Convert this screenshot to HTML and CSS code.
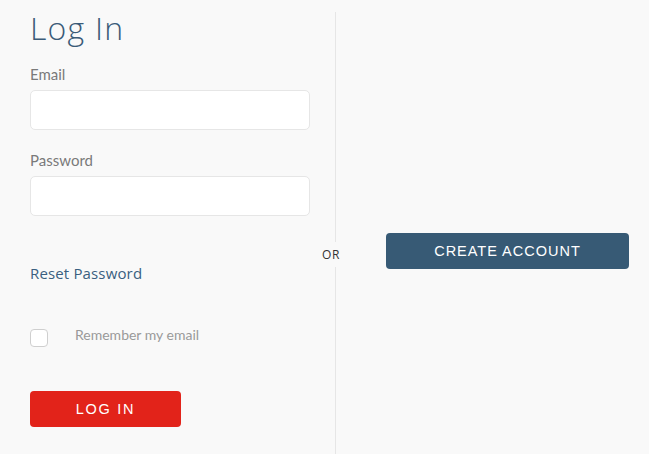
FILE: index.html
```html
<!DOCTYPE html>
<html lang="en">
<head>
<meta charset="utf-8">
<title>Log In</title>
<link rel="stylesheet" href="styles.css">
</head>
<body>
<div class="page">
  <section class="login">
    <h1 class="title">Log In</h1>
    <label class="field-label" for="email">Email</label>
    <input class="field" id="email" type="email">
    <label class="field-label field-label--spaced" for="password">Password</label>
    <input class="field" id="password" type="password">
    <a class="reset" href="#">Reset Password</a>
    <div class="remember">
      <span class="checkbox"></span>
      <span class="remember-text">Remember my email</span>
    </div>
    <button class="btn btn--login" type="button">LOG IN</button>
    <span class="or">OR</span>
  </section>
  <section class="signup">
    <button class="btn btn--create" type="button">CREATE ACCOUNT</button>
  </section>
</div>
</body>
</html>
```
FILE: styles.css
```css
html, body {
  margin: 0;
  padding: 0;
  background: #f9f9f9;
}
body {
  font-family: "Lato", "Open Sans", sans-serif;
}
.page {
  display: flex;
  height: 454px;
  overflow: hidden;
}
.login {
  position: relative;
  width: 305px;
  margin-top: 12px;
  padding-left: 30px;
  border-right: 1px solid #e6e6e6;
  display: flex;
  flex-direction: column;
  align-items: flex-start;
}
.title {
  margin: 0;
  font-family: "Open Sans", sans-serif;
  font-weight: 300;
  font-size: 32px;
  line-height: 32px;
  letter-spacing: 1.2px;
  color: #3b5b78;
}
.field-label {
  margin-top: 21px;
  font-family: "Lato", sans-serif;
  font-size: 15px;
  line-height: 18px;
  color: #7a7a7a;
}
.field-label--spaced {
  margin-top: 21px;
}
.field {
  box-sizing: border-box;
  width: 280px;
  height: 40px;
  margin: 7px 0 0;
  border: 1px solid #e6e6e6;
  border-radius: 5px;
  background: #fff;
  outline: none;
}
.field-label--spaced + .field {
  margin-top: 7px;
}
.reset {
  margin-top: 47px;
  font-family: "Open Sans", sans-serif;
  font-size: 15px;
  line-height: 20px;
  letter-spacing: 0.15px;
  color: #3a5f80;
  text-decoration: none;
}
.remember {
  display: flex;
  align-items: flex-start;
  gap: 27px;
  margin-top: 46px;
}
.checkbox {
  box-sizing: border-box;
  width: 18px;
  height: 18px;
  border: 1px solid #cfcfcf;
  border-radius: 4px;
  background: #fff;
}
.remember-text {
  font-family: "Lato", sans-serif;
  font-size: 14px;
  line-height: 12px;
  color: #999;
}
.btn {
  box-sizing: border-box;
  height: 36px;
  border: 0;
  border-radius: 4px;
  color: #fff;
  font-family: "Liberation Sans", Arial, sans-serif;
  font-size: 14.5px;
  padding: 0;
  cursor: pointer;
}
.btn--login {
  width: 151px;
  margin-top: 44px;
  background: #e2231a;
  letter-spacing: 1.7px;
}
.btn--create {
  width: 243px;
  background: #375a75;
  letter-spacing: 1px;
}
.or {
  position: absolute;
  right: -5px;
  top: 230px;
  padding: 6px 0;
  background: #f9f9f9;
  font-family: "Open Sans", sans-serif;
  font-size: 12px;
  line-height: 13px;
  letter-spacing: 0.6px;
  color: #333;
}
.signup {
  flex: 1;
  padding: 233px 0 0 50px;
}
```
